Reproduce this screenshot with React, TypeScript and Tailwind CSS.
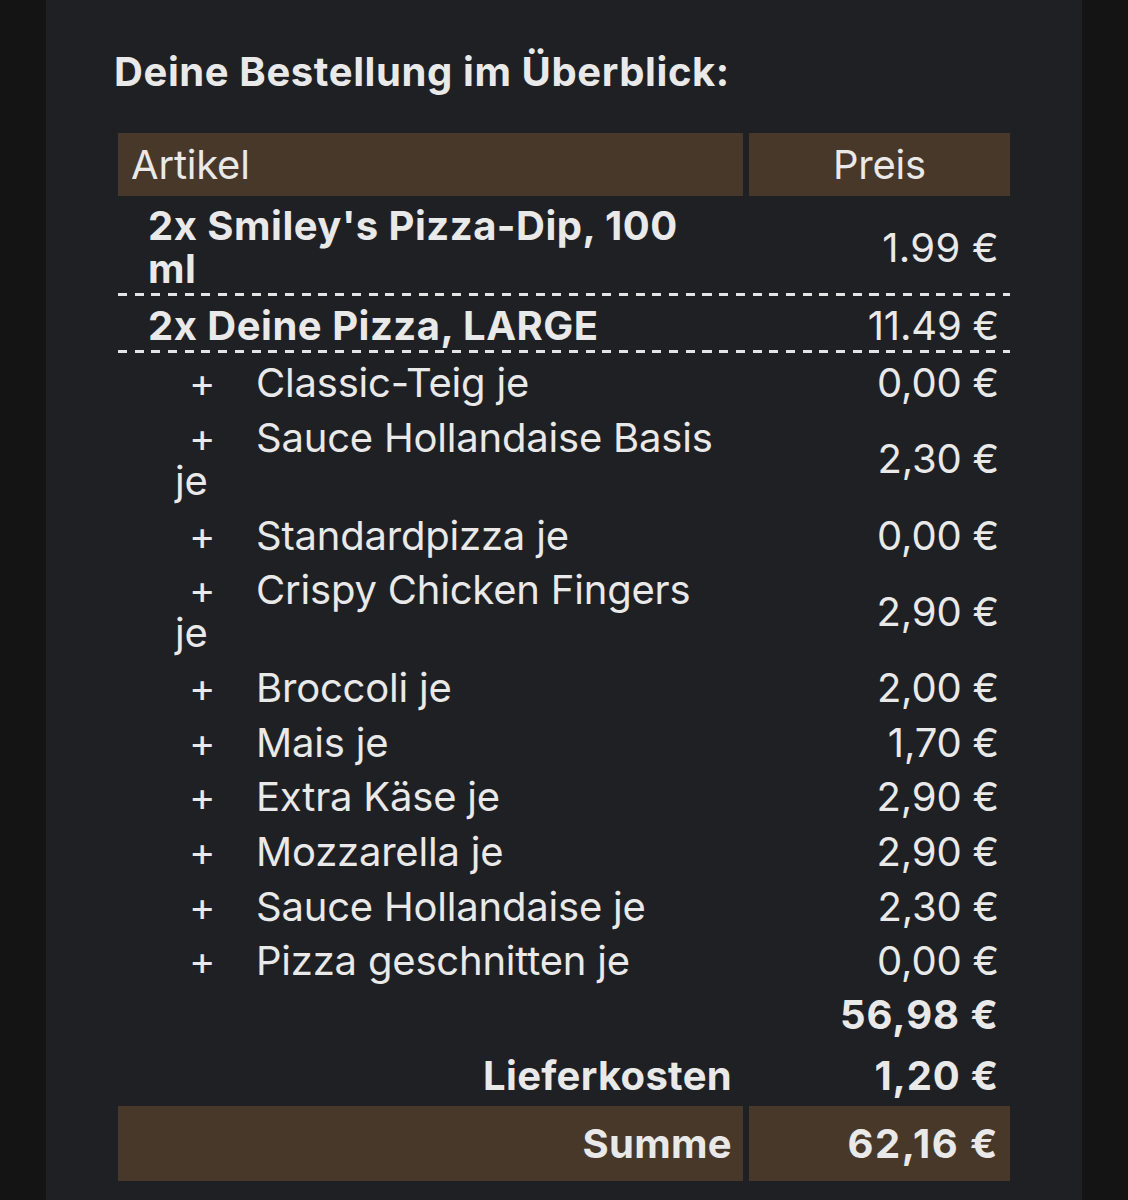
import React from "react";

type Sub = { name: string; rest?: string; price: string };

const subs: Sub[] = [
  { name: "Classic-Teig je", price: "0,00 €" },
  { name: "Sauce Hollandaise Basis", rest: "je", price: "2,30 €" },
  { name: "Standardpizza je", price: "0,00 €" },
  { name: "Crispy Chicken Fingers", rest: "je", price: "2,90 €" },
  { name: "Broccoli je", price: "2,00 €" },
  { name: "Mais je", price: "1,70 €" },
  { name: "Extra Käse je", price: "2,90 €" },
  { name: "Mozzarella je", price: "2,90 €" },
  { name: "Sauce Hollandaise je", price: "2,30 €" },
  { name: "Pizza geschnitten je", price: "0,00 €" },
];

function Dashed() {
  return (
    <div className="h-[3px] w-full bg-[repeating-linear-gradient(90deg,#e4e4e4_0px,#e4e4e4_9px,transparent_9px,transparent_16.7px)]" />
  );
}

export default function App() {
  return (
    <div className="min-h-[1200px] bg-[#141414] flex justify-center font-['Inter','Noto_Sans',sans-serif] text-[#e9e9e9] text-[40px] leading-[43px] tracking-[-0.2px]">
      <div className="w-[1036px] bg-[#1f2024] pt-[48px] pl-[68px] pr-[72px]">
        <h1 className="font-bold leading-[48px] tracking-[0.6px]">Deine Bestellung im Überblick:</h1>
        <div className="mt-[37px] ml-[4px] w-[892px] flex flex-col">
          {/* header */}
          <div className="flex gap-[6px] h-[63px]">
            <div className="w-[625px] bg-[#483829] flex items-center pl-[13px]">Artikel</div>
            <div className="w-[261px] bg-[#483829] flex items-center justify-center">Preis</div>
          </div>
          {/* item 1 */}
          <div className="flex gap-[6px] pt-[8px] pb-[3px] items-center">
            <div className="w-[625px] pl-[30px] pr-[20px] font-bold tracking-[0.5px]">2x Smiley's Pizza-Dip, 100 ml</div>
            <div className="w-[261px] text-right pr-[11px] tracking-[0.3px]">1.99 €</div>
          </div>
          <Dashed />
          <div className="flex gap-[6px] pt-[8px] pb-[3px] items-center">
            <div className="w-[625px] pl-[30px] pr-[20px] font-bold tracking-[0.5px]">2x Deine Pizza, LARGE</div>
            <div className="w-[261px] text-right pr-[11px]">11.49 €</div>
          </div>
          <Dashed />
          <div className="flex flex-col pt-[2.5px]">
            {subs.map((s) => (
              <div key={s.name} className="flex gap-[6px] py-[5.83px] items-center">
                <div className="w-[625px] pl-[57px] pr-[20px] flex flex-col">
                  <div className="flex">
                    <span className="w-[81px] pl-[14px] shrink-0">+</span>
                    <span>{s.name}</span>
                  </div>
                  {s.rest && <div>{s.rest}</div>}
                </div>
                <div className="w-[261px] text-right pr-[11px]">{s.price}</div>
              </div>
            ))}
          </div>
          {/* subtotal */}
          <div className="flex gap-[6px] pt-[5px] pb-[9px] font-bold">
            <div className="w-[625px]" />
            <div className="w-[261px] text-right pr-[11px] tracking-[1px]">56,98 €</div>
          </div>
          <div className="flex gap-[6px] pt-[9px] pb-[9px] font-bold tracking-[0.3px]">
            <div className="w-[625px] text-right pr-[11px]">Lieferkosten</div>
            <div className="w-[261px] text-right pr-[11px] tracking-[0.8px]">1,20 €</div>
          </div>
          <div className="flex gap-[6px] h-[75px] font-bold tracking-[0.3px]">
            <div className="w-[625px] bg-[#483829] flex items-center justify-end pr-[11px]">Summe</div>
            <div className="w-[261px] bg-[#483829] flex items-center justify-end pr-[11px] tracking-[1.5px]">62,16 €</div>
          </div>
        </div>
      </div>
    </div>
  );
}
